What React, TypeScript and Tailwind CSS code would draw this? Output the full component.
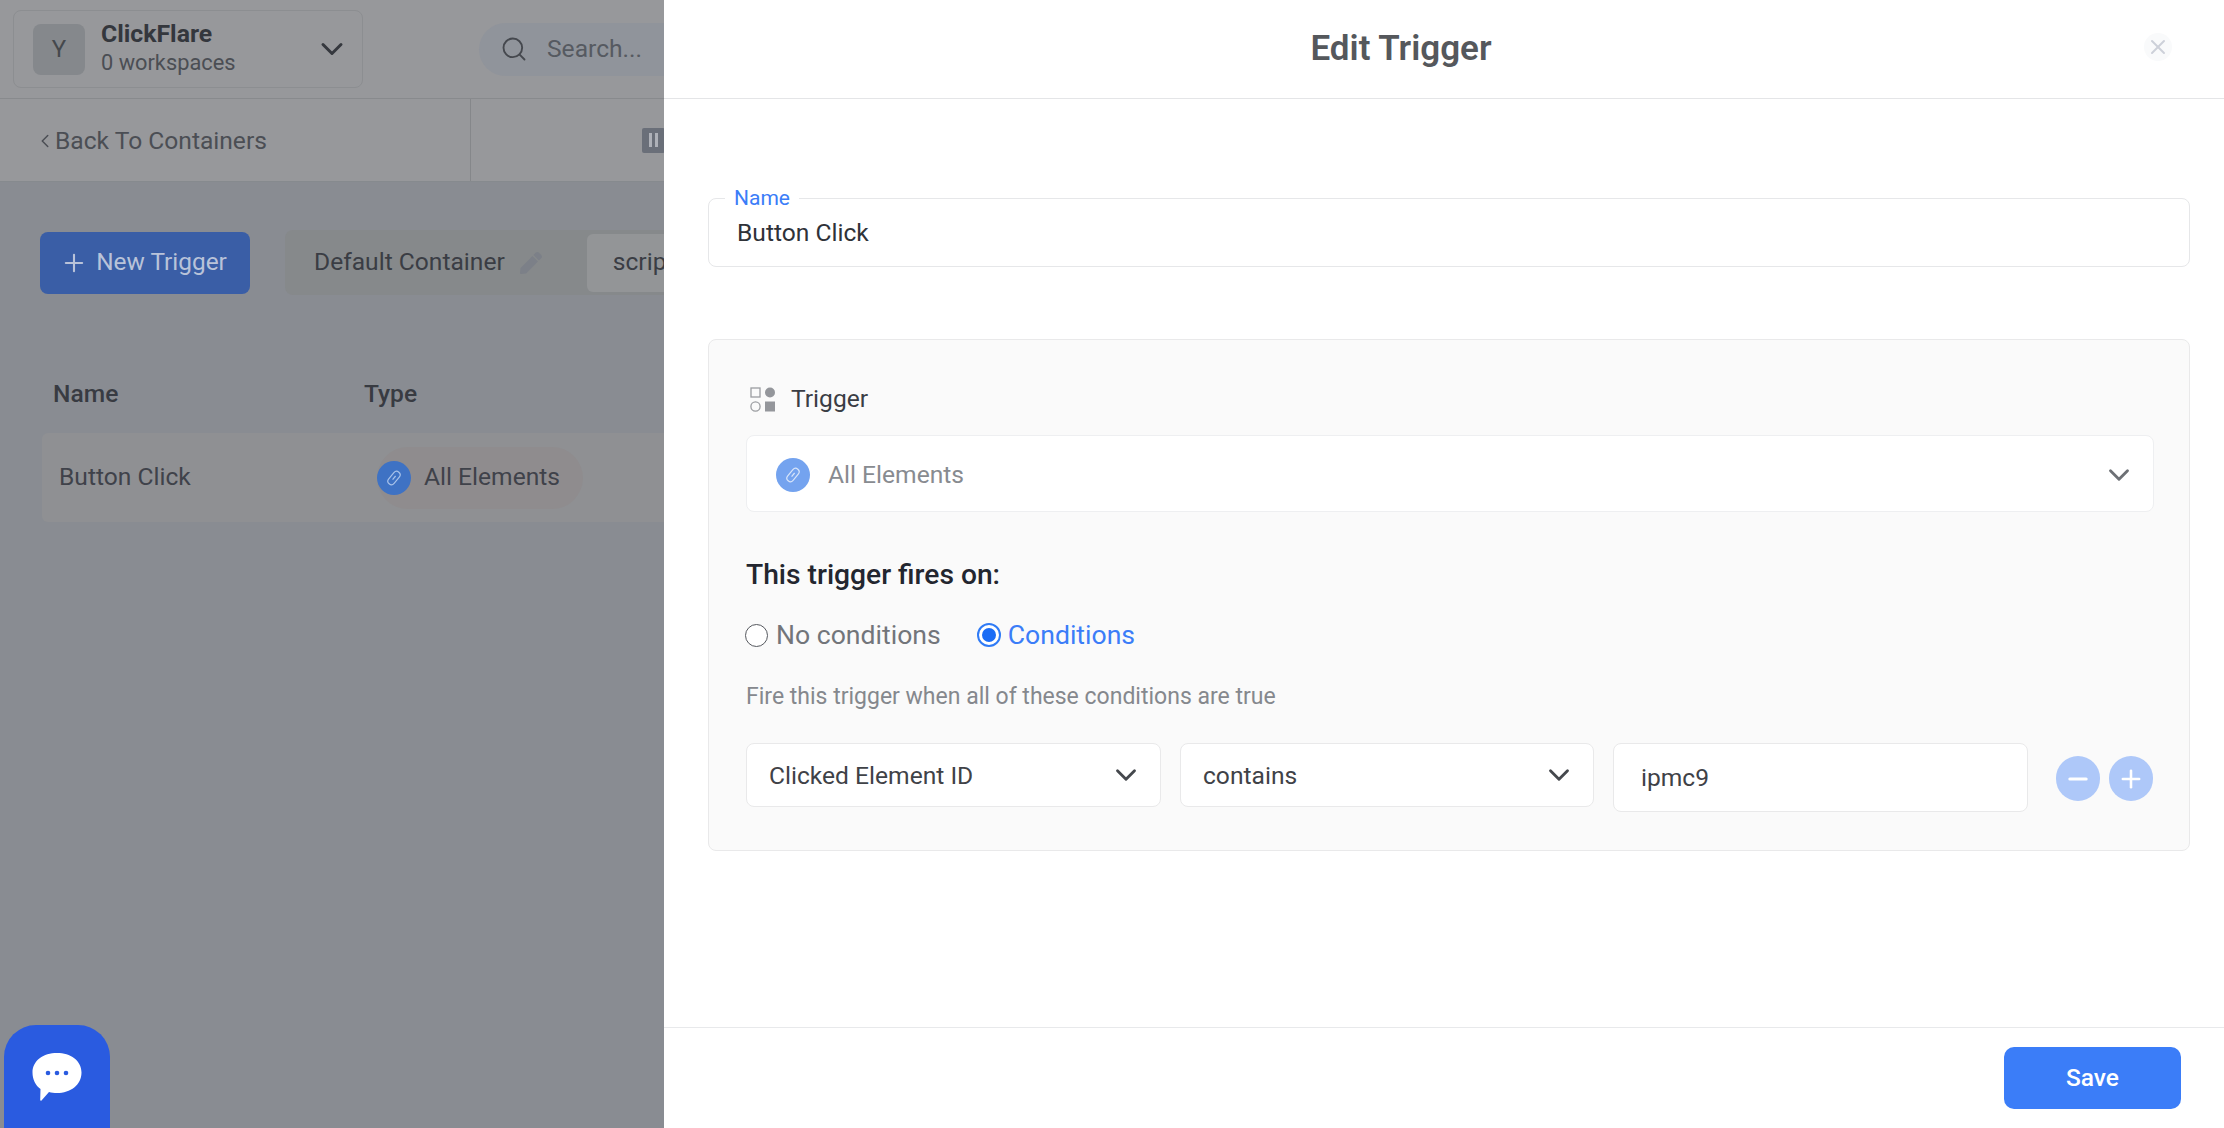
import React from 'react';
import { ChevronDown, ChevronLeft, Minus, Plus, Search, X } from 'lucide-react';
import { FaPen } from 'react-icons/fa';

const LinkBadge = ({ className }: { className: string }) => (
  <span className={`flex h-[34px] w-[34px] shrink-0 items-center justify-center rounded-full ${className}`}>
    <svg width="18" height="18" viewBox="0 0 18 18" fill="none" stroke="currentColor" strokeWidth="1.2">
      <rect x="5.5" y="1.5" width="7" height="15" rx="3.5" transform="rotate(40 9 9)" />
      <path d="M7.6 10.6 10.6 7" />
    </svg>
  </span>
);

const TriggerIcon = () => (
  <svg width="26" height="25" viewBox="0 0 26 25" className="shrink-0">
    <rect x="1" y="1" width="9" height="9" fill="none" stroke="#9b9da1" strokeWidth="1.3" />
    <circle cx="20" cy="5.5" r="5" fill="#94969b" />
    <circle cx="5.5" cy="19.5" r="4.6" fill="none" stroke="#9b9da1" strokeWidth="1.3" />
    <rect x="15" y="14.5" width="10" height="10" fill="#94969b" />
  </svg>
);

const ChatIcon = () => (
  <svg width="50" height="50" viewBox="0 0 50 50">
    <path d="M25 1C38.5 1 49.500 8.500 49.500 20.500C49.500 33 38.500 41 25 41C22 41 19.500 40.700 17 40L9.500 48.500C9 49 8.200 48.700 8.200 48L8.500 37C3.500 33.500 0.500 27.500 0.500 20.500C0.500 8.500 11.500 1 25 1Z" fill="white" />
    <circle cx="16" cy="21" r="2.300" fill="#2a5be0" />
    <circle cx="25" cy="21" r="2.300" fill="#2a5be0" />
    <circle cx="34" cy="21" r="2.300" fill="#2a5be0" />
  </svg>
);

const SelectBox = ({ label, className }: { label: string; className: string }) => (
  <div className={`flex h-[64px] items-center justify-between rounded-[8px] border border-[#e9e9ea] bg-white pl-[22px] pr-[17px] text-[#3f4247] ${className}`}>
    <span className="pt-[2px]">{label}</span>
    <ChevronDown size={34} strokeWidth={2} className="text-[#45484d]" />
  </div>
);

const BackgroundPage = () => (
  <div className="h-full w-full bg-[#898c92] text-[24.6px] text-[#3a3d44]">
    <header className="flex h-[99px] items-center border-b border-[#888a8d] bg-[#97989b] pl-[13px]">
      <div className="flex h-[78px] w-[350px] items-center rounded-[8px] border border-[#8c8e91] pl-[19px]">
        <span className="flex h-[51px] w-[52px] items-center justify-center rounded-[8px] bg-[#85888c] text-[24px] text-[#45484d]">Y</span>
        <div className="ml-[16px] leading-none">
          <div className="-mt-[2px] text-[24.8px] font-bold text-[#34373d]">ClickFlare</div>
          <div className="mt-[5px] text-[21.8px] text-[#4b4e54]">0 workspaces</div>
        </div>
        <ChevronDown size={36} strokeWidth={2} className="ml-auto mr-[12px] text-[#35383e]" />
      </div>
      <div className="ml-[116px] flex h-[53px] w-[300px] items-center rounded-full bg-[#90949b] pl-[21px] text-[#565a61]">
        <Search size={28} strokeWidth={1.6} className="text-[#45484e]" />
        <span className="ml-[19px]">Search...</span>
      </div>
    </header>
    <div className="flex h-[83px] items-center border-b border-[#868a8e] bg-[#97989b]">
      <div className="flex h-full w-[471px] items-center border-r border-[#85878a] pl-[34px] pt-[2px] text-[#4b4e54]">
        <ChevronLeft size={22} strokeWidth={1.6} />
        <span className="-ml-[1px]">Back To Containers</span>
      </div>
      <span className="ml-[171px] flex h-[25px] w-[23px] items-center justify-center rounded-[2px] bg-[#6a6f79]">
        <span className="h-[14px] w-[9px] border-x-[3px] border-[#aeb1b8]" />
      </span>
    </div>
    <div className="flex items-center pl-[40px] pt-[48px]">
      <button className="flex h-[62px] w-[210px] items-center justify-center gap-[8px] rounded-[8px] bg-[#3a5ea6] pr-[3px] text-[24.4px] text-[#b9c3d9]">
        <Plus size={28} strokeWidth={1.8} />
        New Trigger
      </button>
      <div className="ml-[35px] flex h-[65px] items-center rounded-[8px] bg-[#86898b] pl-[29px]">
        <span>Default Container</span>
        <FaPen size={22} className="ml-[15px] text-[#7c8088]" />
        <div className="ml-[45px] flex h-[58px] w-[300px] items-center rounded-[6px] bg-[#939597] pl-[26px]">scripts</div>
      </div>
    </div>
    <div className="flex pl-[53px] pt-[83px] font-medium leading-[32px] text-[#383b42]">
      <span className="w-[311px]">Name</span>
      <span>Type</span>
    </div>
    <div className="ml-[42px] mt-[23px] flex h-[89px] w-[1800px] items-center rounded-[6px] bg-[#8f9093] pl-[17px] text-[#3f424a]">
      <span className="w-[318px]">Button Click</span>
      <span className="flex h-[62px] items-center rounded-full bg-[#8f8c8e] pr-[23px]">
        <LinkBadge className="bg-[#3e72c4] text-[#a9c3ea]" />
        <span className="ml-[13px]">All Elements</span>
      </span>
    </div>
  </div>
);

const EditTriggerDrawer = () => (
  <aside className="absolute inset-y-0 right-0 flex w-[1560px] flex-col bg-white text-[24.6px] text-[#2f3238]">
    <header className="relative flex h-[99px] shrink-0 items-center justify-center border-b border-[#e4e5e7] pr-[86px]">
      <h1 className="text-[35px] font-semibold text-[#55585c]">Edit Trigger</h1>
      <span className="absolute right-[52px] top-[33px] flex h-[28px] w-[28px] items-center justify-center rounded-full bg-[#f9fafb]">
        <X size={24} strokeWidth={2} className="text-[#cdd0d9]" />
      </span>
    </header>
    <div className="flex-1 pl-[44px] pr-[34px] pt-[99px]">
      <div className="relative flex h-[69px] items-center rounded-[8px] border border-[#e6e7e9] pl-[28px] pt-[2px]">
        <span className="absolute -top-[11px] left-[16px] bg-white px-[9px] text-[21px] leading-[21px] text-[#3b7df8]">Name</span>
        Button Click
      </div>
      <section className="mt-[72px] h-[512px] rounded-[8px] border border-[#e9e9ea] bg-[#fafafa] pl-[37px] pr-[35px] pt-[46px]">
        <div className="flex h-[26px] items-center gap-[15px] pl-[4px] text-[#3a3d44]">
          <TriggerIcon />
          Trigger
        </div>
        <div className="mt-[23px] flex h-[77px] items-center rounded-[8px] border border-[#eeeff1] bg-white pl-[29px] pr-[17px] pt-[3px] text-[#888b90]">
          <LinkBadge className="bg-[#74a3ef] text-[#d8e5fa]" />
          <span className="ml-[18px]">All Elements</span>
          <ChevronDown size={34} strokeWidth={2} className="ml-auto text-[#6d7075]" />
        </div>
        <h2 className="mt-[48px] text-[28.2px] font-medium leading-[30px] text-[#23262f]">This trigger fires on:</h2>
        <div className="mt-[30px] flex h-[30px] items-center text-[26.6px]">
          <span className="-ml-[1px] h-[23px] w-[23px] rounded-full border-[1.5px] border-[#55585e] bg-white" />
          <span className="ml-[8px] text-[#72757a]">No conditions</span>
          <span className="ml-[36px] flex h-[24px] w-[24px] items-center justify-center rounded-full border-[2px] border-[#2f7bf6] bg-white">
            <span className="h-[14px] w-[14px] rounded-full bg-[#1a6cf5]" />
          </span>
          <span className="ml-[7px] text-[#3b7df8]">Conditions</span>
        </div>
        <p className="mt-[35px] text-[23px] leading-[24px] text-[#85888d]">Fire this trigger when all of these conditions are true</p>
        <div className="mt-[34px] flex items-start">
          <SelectBox label="Clicked Element ID" className="w-[415px]" />
          <SelectBox label="contains" className="ml-[19px] w-[414px]" />
          <div className="ml-[19px] flex h-[69px] w-[415px] items-center rounded-[8px] border border-[#e9e9ea] bg-white pl-[27px] pt-[2px] text-[#3f4247]">ipmc9</div>
          <div className="ml-[28px] mt-[13px] flex gap-[9px]">
            <span className="flex h-[45px] w-[44px] items-center justify-center rounded-full bg-[#aec8f9] text-white">
              <Minus size={28} strokeWidth={2.6} />
            </span>
            <span className="flex h-[45px] w-[44px] items-center justify-center rounded-full bg-[#aec8f9] text-white">
              <Plus size={28} strokeWidth={2.2} />
            </span>
          </div>
        </div>
      </section>
    </div>
    <footer className="flex h-[101px] shrink-0 items-center justify-end border-t border-[#e8e9eb] pr-[43px]">
      <button className="h-[62px] w-[177px] rounded-[10px] bg-[#3b7df8] text-[24.5px] font-medium text-white">Save</button>
    </footer>
  </aside>
);

export default function App() {
  return (
    <div className="relative h-[1128px] w-[2224px] overflow-hidden [font-family:Roboto,sans-serif]">
      <BackgroundPage />
      <button className="absolute bottom-0 left-[4px] flex h-[103px] w-[106px] items-center justify-center rounded-t-[32px] bg-[#2a5be0]">
        <ChatIcon />
      </button>
      <EditTriggerDrawer />
    </div>
  );
}
